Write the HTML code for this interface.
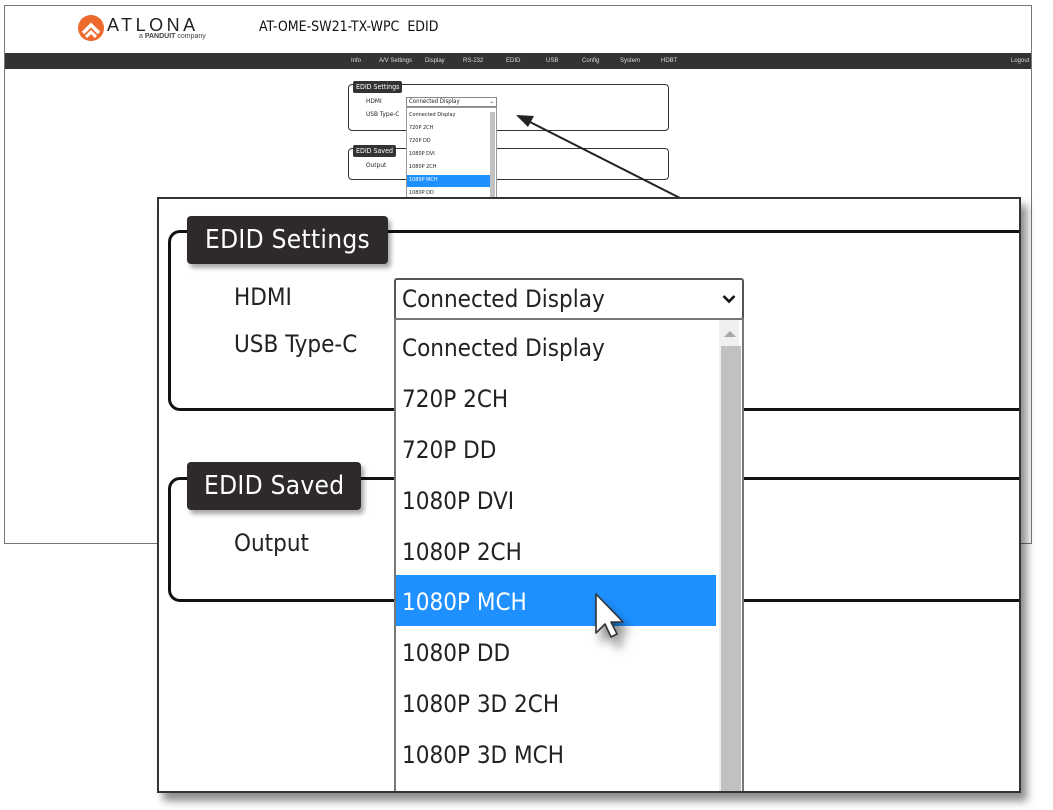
<!DOCTYPE html>
<html><head><meta charset="utf-8"><style>
*{margin:0;padding:0;box-sizing:border-box}
body{width:1053px;height:810px;background:#fff;position:relative;overflow:hidden;font-family:"DejaVu Sans Condensed","DejaVu Sans","Liberation Sans",sans-serif;color:#222}
.a{position:absolute}
.frame{left:4px;top:5px;width:1028px;height:539px;border:1px solid #777;background:#fff}
.nav{left:5px;top:53px;width:1026px;height:16px;background:#333;color:#ddd;font-family:"Liberation Sans",sans-serif;font-size:6px;line-height:16px}
.nav span{position:absolute;top:0}
.sbox{border:1px solid #333;border-radius:4px}
.stab{background:#333;color:#fff;font-size:7px;border-radius:2px;padding:1px 3px;line-height:10px}
.sl{font-size:6.5px}
.sitem{position:absolute;left:2px;font-size:5.5px}
.big{left:157px;top:197px;width:864px;height:596px;border:2px solid #333;background:#fff;box-shadow:6px 8px 8px rgba(0,0,0,.45);overflow:hidden}
.bbox{border:3px solid #111;border-right:none;border-radius:12px 0 0 12px}
.btab{background:#2e2a2a;color:#fff;font-size:26px;border-radius:4px;padding:0 15px;line-height:48px;box-shadow:3px 4px 5px rgba(0,0,0,.35);letter-spacing:0.3px}
.bl{font-size:24px}
.item{position:absolute;left:6px;font-size:24px;height:51px;line-height:51px}
</style></head><body>
<div class="a frame"></div>
<svg class="a" style="left:77px;top:14px" width="28" height="28" viewBox="0 0 28 28"><circle cx="14" cy="14" r="13" fill="#ee6a2c"/><path d="M6 19 L14 11 L22 19" stroke="#fff" stroke-width="3.5" fill="none"/><path d="M9 23 L14 18 L19 23" stroke="#fff" stroke-width="3" fill="none"/></svg>
<div class="a" style="left:107px;top:15px;font-family:'Liberation Sans',sans-serif;font-size:18px;letter-spacing:3.5px;color:#222">ATLONA</div>
<div class="a" style="left:139px;top:33px;font-family:'Liberation Sans',sans-serif;font-size:7px;color:#444">a <b>PANDUIT</b> company</div>
<div class="a" style="left:259px;top:19px;font-size:14px;color:#111;font-weight:500">AT-OME-SW21-TX-WPC&nbsp;&nbsp;EDID</div>
<div class="a nav">
<span style="left:346px">Info</span><span style="left:374px">A/V Settings</span><span style="left:420px">Display</span><span style="left:458px">RS-232</span><span style="left:501px">EDID</span><span style="left:541px">USB</span><span style="left:577px">Config</span><span style="left:615px">System</span><span style="left:656px">HDBT</span><span style="left:1006px">Logout</span>
</div>
<div class="a sbox" style="left:348px;top:84px;width:321px;height:47px"></div>
<div class="a stab" style="left:353px;top:81px">EDID Settings</div>
<div class="a sl" style="left:366px;top:97px">HDMI</div>
<div class="a sl" style="left:366px;top:110px">USB Type-C</div>
<div class="a" style="left:406px;top:97px;width:91px;height:10px;border:1px solid #888;background:#fff;font-size:6px;padding-left:2px;line-height:8px">Connected Display<span style="position:absolute;right:2px">⌄</span></div>
<div class="a sbox" style="left:348px;top:148px;width:321px;height:32px"></div>
<div class="a stab" style="left:353px;top:145px">EDID Saved</div>
<div class="a sl" style="left:366px;top:161px">Output</div>
<div class="a" style="left:406px;top:107px;width:91px;height:92px;border:1px solid #999;background:#fff;overflow:hidden">
<div class="a" style="right:1px;top:4px;width:5px;height:88px;background:#c2c2c2"></div>
<div class="sitem" style="top:4px">Connected Display</div>
<div class="sitem" style="top:17px">720P 2CH</div>
<div class="sitem" style="top:30px">720P DD</div>
<div class="sitem" style="top:43px">1080P DVI</div>
<div class="sitem" style="top:56px">1080P 2CH</div>
<div class="a" style="left:0;top:67px;width:83px;height:12px;background:#1e90ff"></div>
<div class="sitem" style="top:69px;color:#fff">1080P MCH</div>
<div class="sitem" style="top:82px">1080P DD</div>
</div>
<svg class="a" style="left:0;top:0" width="1053" height="810"><line x1="680" y1="198" x2="528" y2="121" stroke="#222" stroke-width="2"/><path d="M516 115 L534 116 L528 127 Z" fill="#222"/></svg>
<div class="a big">
<div class="a bbox" style="left:9px;top:31px;width:860px;height:181px"></div>
<div class="a btab" style="left:28px;top:17px;padding:0 18px">EDID Settings</div>
<div class="a bl" style="left:75px;top:84px">HDMI</div>
<div class="a bl" style="left:75px;top:131px">USB Type-C</div>
<div class="a" style="left:235px;top:79px;width:350px;height:42px;border:2px solid #555;border-radius:3px;background:#fff;font-size:24px;line-height:38px;padding-left:6px">Connected Display
<svg style="position:absolute;right:6px;top:14px" width="14" height="10" viewBox="0 0 14 10"><path d="M1.5 2 L7 7.5 L12.5 2" stroke="#111" stroke-width="2.6" fill="none"/></svg></div>
<div class="a bbox" style="left:9px;top:278px;width:860px;height:125px"></div>
<div class="a btab" style="left:28px;top:263px;padding:0 17px">EDID Saved</div>
<div class="a bl" style="left:75px;top:330px">Output</div>
<div class="a" style="left:235px;top:119px;width:350px;height:480px;border:2px solid #777;border-bottom:none;background:#fff">
<div class="a" style="left:323px;top:0;width:20px;height:480px;background:#f0f0f0"></div>
<div class="a" style="left:325px;top:26px;width:20px;height:460px;background:#c1c1c1"></div>
<svg class="a" style="left:327px;top:10px" width="14" height="8"><path d="M1 7 L7 1 L13 7Z" fill="#a8a8a8"/></svg>
<div class="item" style="top:3px">Connected Display</div>
<div class="item" style="top:54px">720P 2CH</div>
<div class="item" style="top:105px">720P DD</div>
<div class="item" style="top:156px">1080P DVI</div>
<div class="item" style="top:207px">1080P 2CH</div>
<div class="a" style="left:0;top:255px;width:320px;height:51px;background:#1e90ff"></div>
<div class="item" style="top:257px;color:#fff">1080P MCH</div>
<div class="item" style="top:308px">1080P DD</div>
<div class="item" style="top:359px">1080P 3D 2CH</div>
<div class="item" style="top:410px">1080P 3D MCH</div>
</div>
<svg class="a" style="left:432px;top:392px;filter:drop-shadow(6px 10px 5px rgba(0,0,0,.45))" width="36" height="50" viewBox="0 0 36 50"><path d="M5 3 L5 42 L14 33 L20 46 L26 43 L20 31 L32 31 Z" fill="#fff" stroke="#333" stroke-width="1.6" stroke-linejoin="round"/></svg>
</div>
</body></html>
